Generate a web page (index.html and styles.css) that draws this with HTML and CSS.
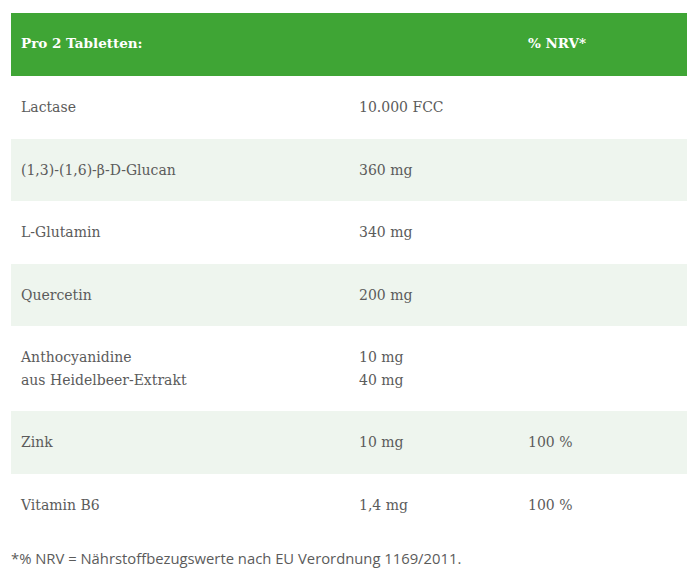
FILE: index.html
```html
<!DOCTYPE html>
<html lang="de">
<head>
<meta charset="utf-8">
<link rel="stylesheet" href="styles.css">
</head>
<body>
<div class="wrap">
  <table class="nutri">
    <thead>
      <tr><th>Pro 2 Tabletten:</th><th></th><th>% NRV*</th></tr>
    </thead>
    <tbody>
      <tr><td>Lactase</td><td>10.000 FCC</td><td></td></tr>
      <tr><td>(1,3)-(1,6)-β-D-Glucan</td><td>360 mg</td><td></td></tr>
      <tr><td>L-Glutamin</td><td>340 mg</td><td></td></tr>
      <tr><td>Quercetin</td><td>200 mg</td><td></td></tr>
      <tr><td>Anthocyanidine<br>aus Heidelbeer-Extrakt</td><td>10 mg<br>40 mg</td><td></td></tr>
      <tr><td>Zink</td><td>10 mg</td><td>100 %</td></tr>
      <tr><td>Vitamin B6</td><td>1,4 mg</td><td>100 %</td></tr>
    </tbody>
  </table>
  <p class="note">*% NRV = Nährstoffbezugswerte nach EU Verordnung 1169/2011.</p>
</div>
</body>
</html>
```
FILE: styles.css
```css
html, body { margin: 0; padding: 0; background: #fff; }
.wrap { padding: 13px 13px 0 11px; }
.nutri {
  width: 676px;
  border-collapse: collapse;
  font-family: "DejaVu Serif", "Liberation Serif", serif;
  font-size: 14px;
  line-height: 22.5px;
  color: #5b5b5b;
}
.nutri th, .nutri td {
  text-align: left;
  vertical-align: top;
  padding: 20px 10px;
  font-weight: normal;
}
.nutri th:nth-child(1), .nutri td:nth-child(1) { width: 318px; }
.nutri th:nth-child(2), .nutri td:nth-child(2) { width: 149px; }
.nutri thead tr { background: #3fa535; }
.nutri th {
  color: #fff;
  font-weight: bold;
  font-size: 13.5px;
  line-height: 23px;
  padding-top: 19px;
  padding-bottom: 21px;
}
.nutri tbody tr:nth-child(even) { background: #eef5ee; }
.note {
  margin: 12px 0 0 0;
  font-family: "Open Sans", "Noto Sans", sans-serif;
  font-size: 14.8px;
  color: #5b5b5b;
}
```
